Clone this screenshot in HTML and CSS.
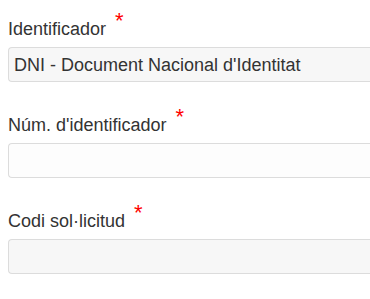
FILE: index.html
```html
<!DOCTYPE html>
<html lang="ca">
<head>
<meta charset="utf-8">
<link rel="stylesheet" href="styles.css">
</head>
<body>
<form class="form">
  <div class="group">
    <label class="label">Identificador<span class="req">*</span></label>
    <div class="input input-select">DNI - Document Nacional d'Identitat</div>
  </div>
  <div class="group">
    <label class="label">Núm. d'identificador<span class="req">*</span></label>
    <div class="input input-light"></div>
  </div>
  <div class="group">
    <label class="label">Codi sol·licitud<span class="req">*</span></label>
    <div class="input input-grey"></div>
  </div>
</form>
</body>
</html>
```
FILE: styles.css
```css
html, body {
  margin: 0;
  padding: 0;
  background: #ffffff;
}
.form {
  padding: 16px 0 0 8px;
  font-family: "Liberation Sans", Arial, sans-serif;
  font-size: 18px;
  color: #333333;
}
.group {
  margin-bottom: 30px;
}
.label {
  display: block;
  line-height: 26px;
  margin-bottom: 5px;
}
.req {
  color: #ff0000;
  font-size: 22px;
  line-height: 0;
  vertical-align: 7px;
  margin-left: 9px;
}
.input {
  box-sizing: border-box;
  height: 35px;
  border: 1px solid #dcdcdc;
  border-right: none;
  border-radius: 4px 0 0 4px;
  padding: 0 5px;
  display: flex;
  align-items: center;
  line-height: 1;
  white-space: nowrap;
}
.input-select {
  background: #f7f7f7;
}
.input-light {
  background: #fdfdfd;
}
.input-grey {
  background: #f7f7f7;
}
```
